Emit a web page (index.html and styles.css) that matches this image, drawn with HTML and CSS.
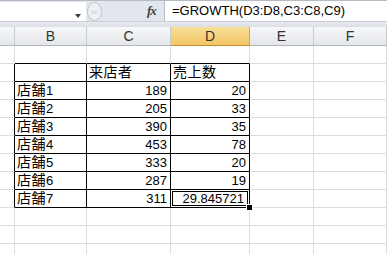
FILE: index.html
```html
<!DOCTYPE html>
<html lang="ja">
<head>
    <meta charset="UTF-8">
    <title>GROWTH</title>
    <link rel="stylesheet" href="styles.css">
</head>
<body>
    <div class="formula-bar">
        <div class="name-box"><span class="arrow"></span></div>
        <div class="fx-area">
            <span class="knob"><span class="knob-dot"></span></span>
            <span class="fx">fx</span>
        </div>
        <div class="formula">=GROWTH(D3:D8,C3:C8,C9)</div>
    </div>
    <div class="bar-gap"></div>

    <div class="sheet">
        <div class="row head">
            <div class="c"></div>
            <div class="c">B</div>
            <div class="c">C</div>
            <div class="c active">D</div>
            <div class="c">E</div>
            <div class="c">F</div>
        </div>
        <div class="row">
            <div class="c"></div>
            <div class="c bk-b"></div>
            <div class="c bk-b"></div>
            <div class="c bk-b"></div>
            <div class="c"></div>
            <div class="c"></div>
        </div>
        <div class="row">
            <div class="c bk-r"></div>
            <div class="c bk"></div>
            <div class="c bk"><span class="jp">来店者</span></div>
            <div class="c bk"><span class="jp">売上数</span></div>
            <div class="c"></div>
            <div class="c"></div>
        </div>
        <div class="row">
            <div class="c bk-r"></div>
            <div class="c bk"><span class="jp">店舗</span>1</div>
            <div class="c bk num">189</div>
            <div class="c bk num">20</div>
            <div class="c"></div>
            <div class="c"></div>
        </div>
        <div class="row">
            <div class="c bk-r"></div>
            <div class="c bk"><span class="jp">店舗</span>2</div>
            <div class="c bk num">205</div>
            <div class="c bk num">33</div>
            <div class="c"></div>
            <div class="c"></div>
        </div>
        <div class="row">
            <div class="c bk-r"></div>
            <div class="c bk"><span class="jp">店舗</span>3</div>
            <div class="c bk num">390</div>
            <div class="c bk num">35</div>
            <div class="c"></div>
            <div class="c"></div>
        </div>
        <div class="row">
            <div class="c bk-r"></div>
            <div class="c bk"><span class="jp">店舗</span>4</div>
            <div class="c bk num">453</div>
            <div class="c bk num">78</div>
            <div class="c"></div>
            <div class="c"></div>
        </div>
        <div class="row">
            <div class="c bk-r"></div>
            <div class="c bk"><span class="jp">店舗</span>5</div>
            <div class="c bk num">333</div>
            <div class="c bk num">20</div>
            <div class="c"></div>
            <div class="c"></div>
        </div>
        <div class="row">
            <div class="c bk-r"></div>
            <div class="c bk"><span class="jp">店舗</span>6</div>
            <div class="c bk num">287</div>
            <div class="c bk num">19</div>
            <div class="c"></div>
            <div class="c"></div>
        </div>
        <div class="row">
            <div class="c bk-r"></div>
            <div class="c bk"><span class="jp">店舗</span>7</div>
            <div class="c bk num">311</div>
            <div class="c bk num sel">29.845721<span class="handle"></span></div>
            <div class="c"></div>
            <div class="c"></div>
        </div>
        <div class="row">
            <div class="c"></div><div class="c"></div><div class="c"></div>
            <div class="c"></div><div class="c"></div><div class="c"></div>
        </div>
        <div class="row">
            <div class="c"></div><div class="c"></div><div class="c"></div>
            <div class="c"></div><div class="c"></div><div class="c"></div>
        </div>
        <div class="row">
            <div class="c"></div><div class="c"></div><div class="c"></div>
            <div class="c"></div><div class="c"></div><div class="c"></div>
        </div>
    </div>
</body>
</html>
```

FILE: styles.css
```css
body {
    margin: 0;
    width: 387px;
    height: 254px;
    overflow: hidden;
    background-color: white;
    font-family: "Liberation Sans", "Noto Sans CJK JP", sans-serif;
    font-size: 13px;
    color: #000;
}

/* formula bar */

.formula-bar {
    display: flex;
    height: 22px;
    border-top: 1px solid #b4bbc5;
    border-bottom: 1px solid #c9ced6;
    box-sizing: border-box;
    background-color: #e2e7ee;
}

.name-box {
    position: relative;
    width: 86px;
    background-color: white;
    border-top: 1px solid #dfe3e8;
}

.arrow {
    position: absolute;
    left: 75px;
    top: 12px;
    border-left: 3px solid transparent;
    border-right: 3px solid transparent;
    border-top: 4px solid #3c3c3c;
}

.fx-area {
    display: flex;
    align-items: center;
    width: 78px;
    border-right: 1px solid #b8bec8;
}

.knob {
    display: flex;
    align-items: center;
    justify-content: center;
    width: 15px;
    height: 19px;
    margin-left: 1px;
    border-radius: 50%;
    border: 1px solid #c2c8d0;
    box-sizing: border-box;
    background-color: #eef1f4;
}

.knob-dot {
    width: 7px;
    height: 6px;
    border-radius: 50%;
    background: linear-gradient(#f8f9fa, #d2d7de);
}

.fx {
    margin-left: 45px;
    font-family: "Liberation Serif", serif;
    font-style: italic;
    font-weight: bold;
    font-size: 13px;
    color: #444;
    letter-spacing: -1px;
}

.formula {
    flex: 1;
    background-color: white;
    padding-left: 7px;
    line-height: 20px;
    white-space: nowrap;
}

.bar-gap {
    height: 5px;
    background: linear-gradient(#e7eaee, #dcdfe4);
}

/* sheet */

.row {
    display: grid;
    grid-template-columns: 15px 72px 84px 79px 64px 73px;
}

.c {
    height: 18px;
    box-sizing: border-box;
    border-right: 1px solid #dadcdd;
    border-bottom: 1px solid #dadcdd;
    line-height: 17px;
    padding: 0 2px;
    white-space: nowrap;
    overflow: hidden;
}

.jp {
    font-size: 14px;
    line-height: 17px;
    letter-spacing: 0.5px;
}

.head .c {
    height: 19px;
    line-height: 18px;
    text-align: center;
    font-size: 14px;
    color: #333;
    background: linear-gradient(#f6f7f8, #e4e6e9);
    border-right-color: #c5cad1;
    border-bottom-color: #b1b7bf;
}

.head .active {
    background: linear-gradient(#f9df97, #f3c665);
    border-right-color: #d9a448;
    border-bottom-color: #c28a33;
}

.bk {
    border-right-color: #000;
    border-bottom-color: #000;
}

.bk-r {
    border-right-color: #000;
}

.bk-b {
    border-bottom-color: #000;
}

.num {
    text-align: right;
    padding-right: 3px;
}

.sel {
    position: relative;
    overflow: visible;
    padding-right: 5px;
    box-shadow: inset 0 0 0 1px #fff, inset 0 0 0 2px #000;
}

.handle {
    position: absolute;
    right: -3px;
    bottom: -3px;
    width: 5px;
    height: 5px;
    background-color: #000;
    border: 1px solid #fff;
    box-sizing: content-box;
    margin: -1px;
}
```
